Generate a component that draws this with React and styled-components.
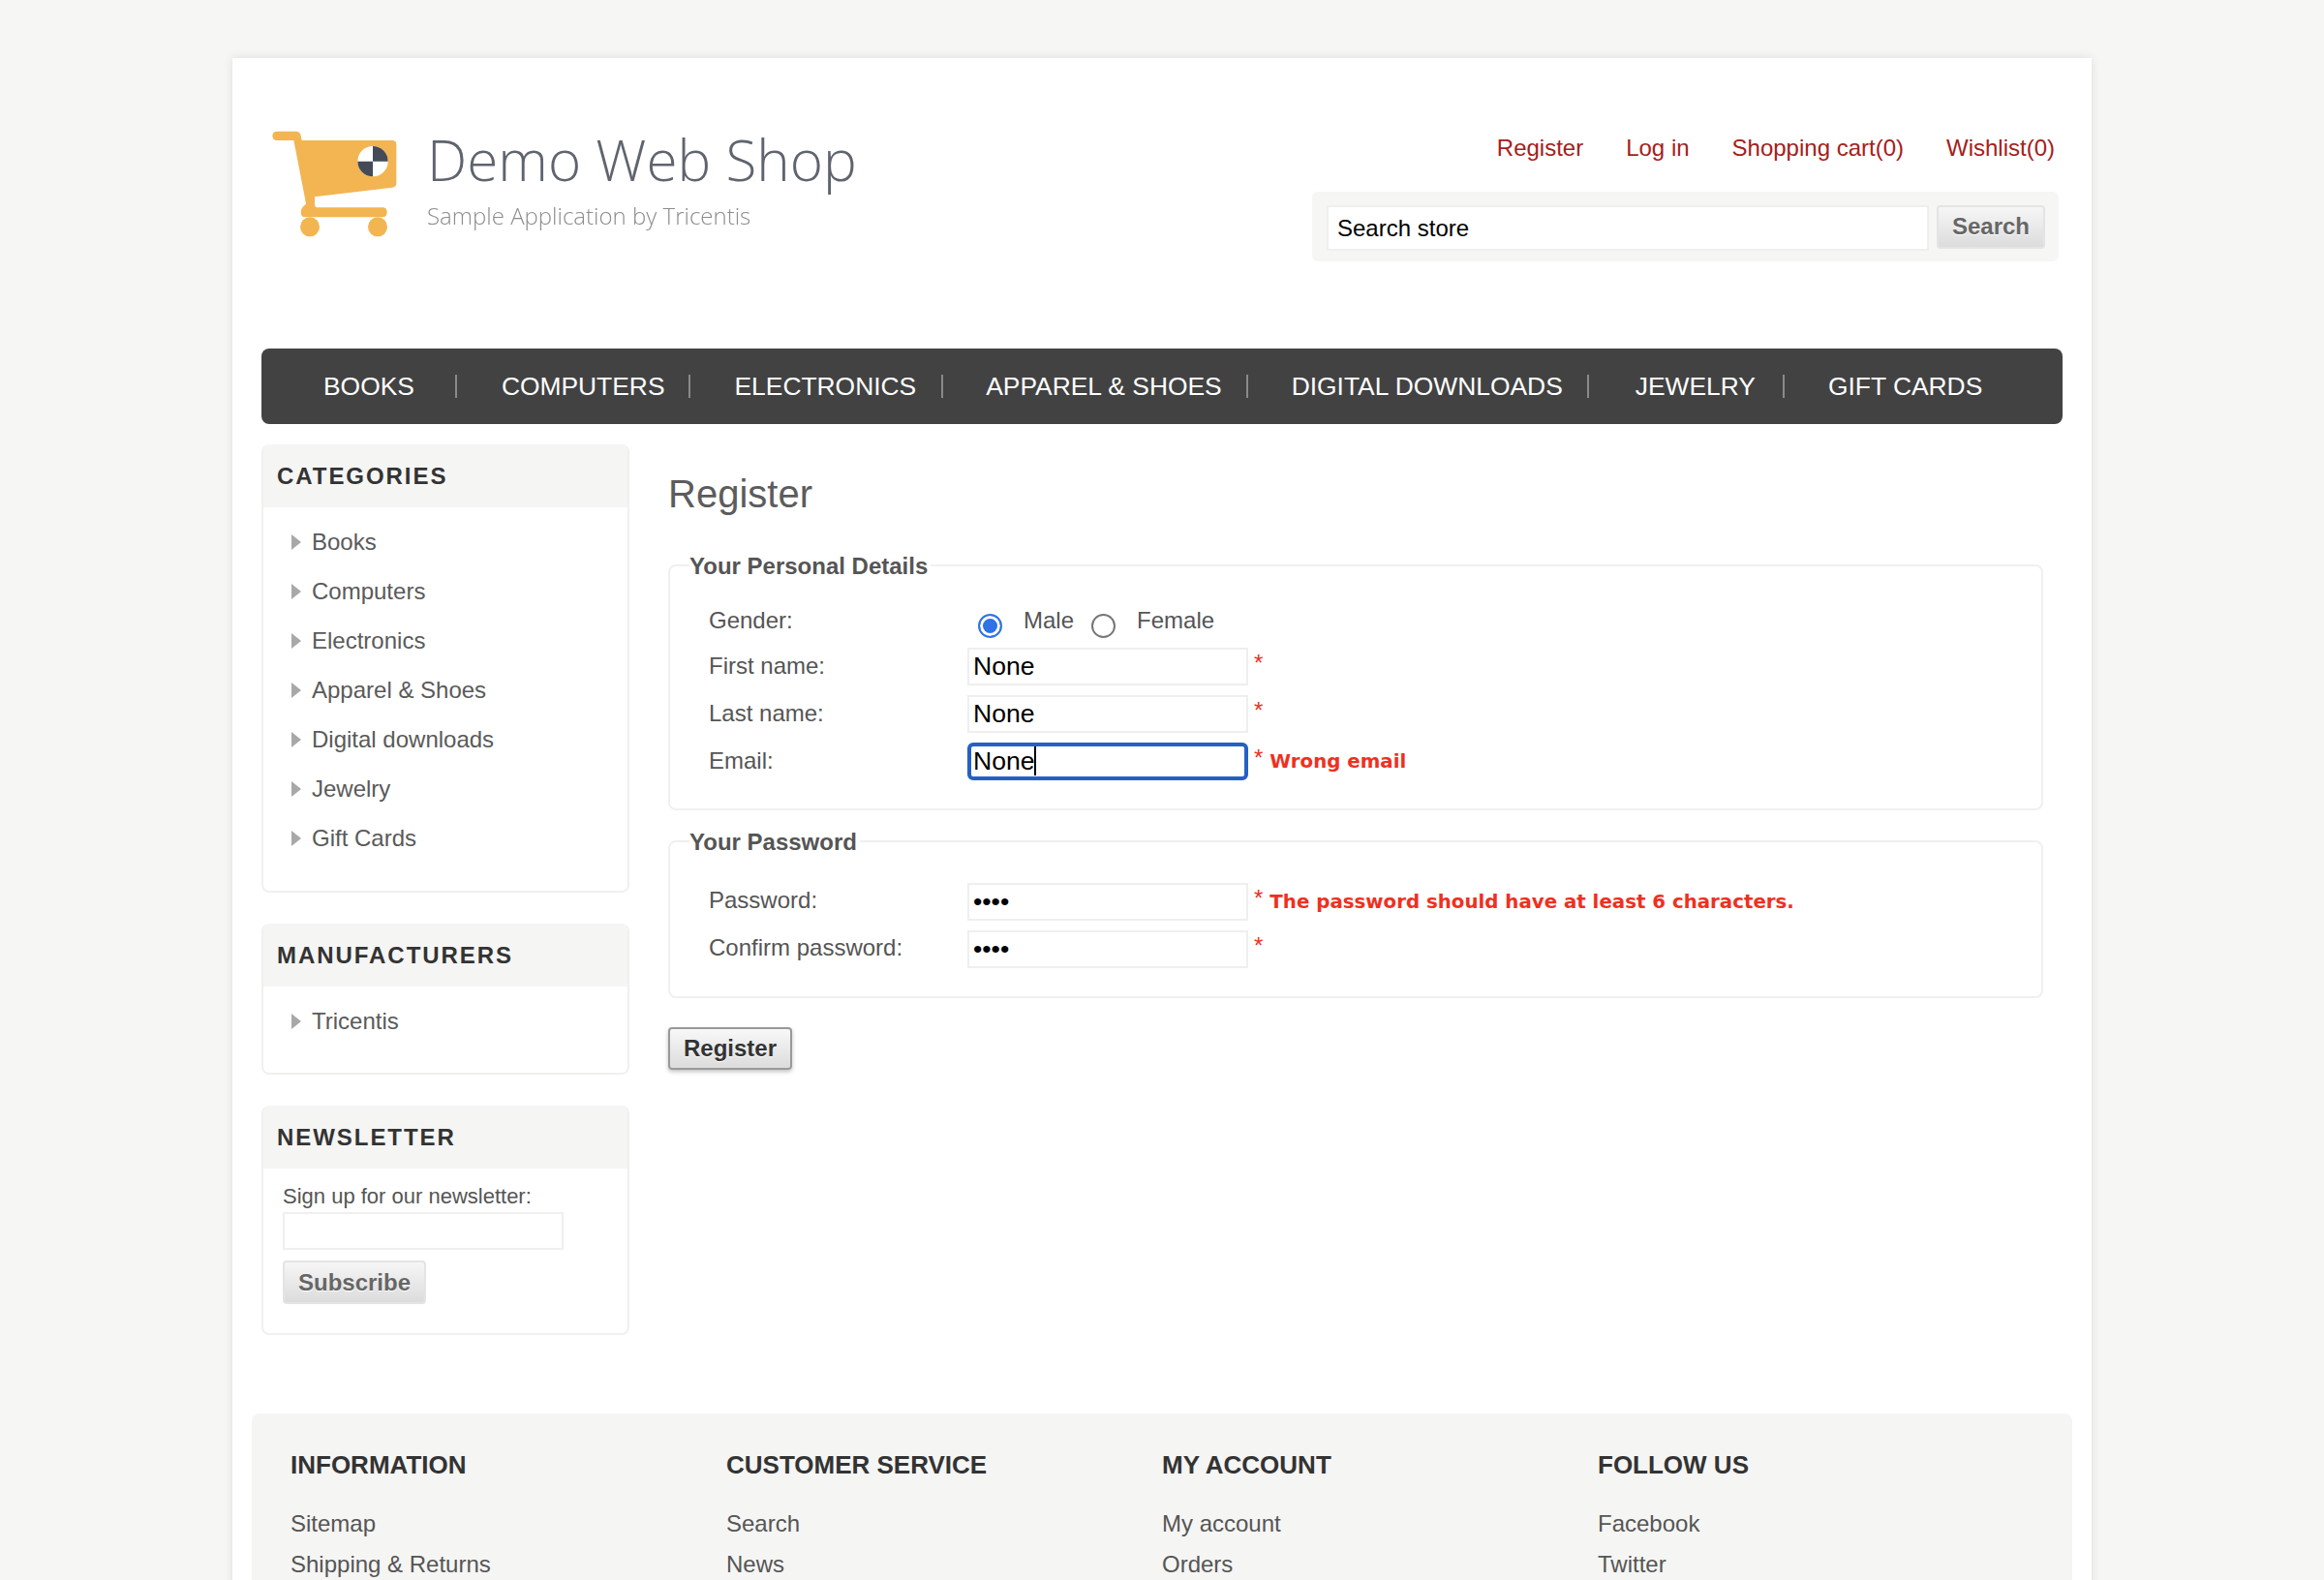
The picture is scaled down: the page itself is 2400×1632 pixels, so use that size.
import React from "react";
import styled, { createGlobalStyle } from "styled-components";

const GlobalStyle = createGlobalStyle`
  html, body {
    margin: 0;
    height: 100%;
    overflow: hidden;
    background: #f6f6f5;
    font-family: "Liberation Sans", Arial, sans-serif;
  }
  * { box-sizing: border-box; }
`;

const Page = styled.div`
  width: 1920px;
  margin: 60px auto 0;
  background: #fff;
  box-shadow: 0 0 10px rgba(0, 0, 0, 0.1);
  color: #555;
  font-size: 24px;
`;

// cabecera
const Header = styled.header`
  height: 300px;
  padding: 60px 34px 0 30px;
  display: flex;
  justify-content: space-between;
`;
const Logo = styled.div`
  display: flex;
  filter: blur(0.5px);
`;
const LogoText = styled.div`
  margin: 4px 0 0 1px;
  font-family: "Open Sans", sans-serif;
  font-weight: 300;
`;
const LogoTitle = styled.div`
  font-size: 58.4px;
  line-height: 82px;
  color: #5f646e;
`;
const LogoSub = styled.div`
  font-size: 24px;
  line-height: 32px;
  color: #8d8d8d;
  margin-top: 1px;
`;
const HeaderRight = styled.div`
  width: 771px;
  padding-top: 18px;
`;
const TopLinks = styled.div`
  display: flex;
  justify-content: flex-end;
  gap: 44px;
  padding-right: 4px;
  line-height: 30px;
`;
const TopLink = styled.a`
  color: #a5201a;
`;
const SearchBox = styled.div`
  margin-top: 30px;
  height: 72px;
  padding: 14px 14px 0 15px;
  background: #f6f6f5;
  border-radius: 6px;
  display: flex;
  gap: 8px;
  align-items: flex-start;
`;
const SearchInput = styled.input`
  flex: 1;
  height: 47px;
  border: 2px solid #efefef;
  background: #fff;
  padding: 0 9px;
  font: 24px "Liberation Sans", Arial, sans-serif;
  color: #000;
  outline: none;
`;
const GreyButton = styled.button`
  background: linear-gradient(#f6f6f6, #dcdcdc);
  border: 2px solid #e4e4e4;
  border-radius: 4px;
  color: #666;
  font: bold 24px "Liberation Sans", Arial, sans-serif;
  text-shadow: 0 1px 0 #fff;
  height: 45px;
  padding: 0;
  width: ${(p) => p.$width}px;
`;
const SearchButton = styled(GreyButton)`
  padding-bottom: 2px;
`;
const SubscribeButton = styled(GreyButton)`
  margin-top: 11px;
`;

// menu
const Menu = styled.nav`
  margin: 0 30px;
  height: 78px;
  background: #424242;
  border-radius: 8px;
  display: flex;
  align-items: center;
`;
const MenuItem = styled.a`
  color: #fff;
  font-size: 26.4px;
  line-height: 24px;
  white-space: nowrap;
  padding-left: ${(p) => p.$left}px;
  padding-right: ${(p) => p.$right}px;
  border-right: ${(p) => (p.$last ? "none" : "2px solid #8a8a8a")};
`;

// cuerpo
const Content = styled.div`
  padding: 21px 50px 0 30px;
  display: flex;
  gap: 40px;
`;
const Sidebar = styled.aside`
  width: 380px;
  flex: none;
  display: flex;
  flex-direction: column;
  gap: 32px;
`;
const Block = styled.section`
  border: 2px solid #f0f0ef;
  border-top: none;
  border-radius: 8px;
  overflow: hidden;
  padding-bottom: ${(p) => p.$bottom}px;
`;
const BlockTitle = styled.h3`
  margin: 0;
  height: 65px;
  background: #f5f5f4;
  padding-left: 14px;
  font-size: 24px;
  line-height: 65px;
  font-weight: bold;
  letter-spacing: 1.95px;
  color: #333;
`;
const BlockList = styled.ul`
  list-style: none;
  margin: 10px 0 0;
  padding: 0;
`;
const BlockItem = styled.li`
  height: 51px;
  padding-left: 29px;
  display: flex;
  align-items: center;
  gap: 11px;
  color: #5a5a5a;
`;
const Arrow = styled.span`
  width: 0;
  height: 0;
  border-left: 10px solid #a8a8a8;
  border-top: 8px solid transparent;
  border-bottom: 8px solid transparent;
`;
const Newsletter = styled.div`
  padding: 14px 0 0 20px;
  font-size: 22px;
  line-height: 30px;
`;
const SmallInput = styled.input`
  display: block;
  width: 290px;
  height: 39px;
  margin-top: ${(p) => p.$top || 0}px;
  border: 2px solid #efefef;
  background: #fff;
  padding: 0 4px;
  font: 26.6px "Liberation Sans", Arial, sans-serif;
  color: #000;
  outline: none;
`;

// formulario
const Main = styled.main`
  flex: 1;
`;
const PageTitle = styled.h1`
  margin: 25px 0 0;
  font-size: 40px;
  line-height: 52px;
  font-weight: normal;
  color: #5c5c5c;
`;
const Fieldset = styled.fieldset`
  margin: ${(p) => p.$top}px 0 0;
  padding: ${(p) => p.$padTop}px 0 0 40px;
  height: ${(p) => p.$height}px;
  border: 2px solid #f0f0f0;
  border-radius: 8px;
`;
const Legend = styled.legend`
  margin-left: -20px;
  padding: 2px 3px 0 0;
  font-size: 24px;
  line-height: 28px;
  font-weight: bold;
  color: #555;
`;
const Row = styled.div`
  height: 39px;
  margin-bottom: 10px;
  display: flex;
  align-items: flex-start;
`;
const GenderRow = styled(Row)`
  height: 31px;
  margin-bottom: 18px;
`;
const Label = styled.label`
  width: 267px;
  flex: none;
  line-height: ${(p) => p.$line}px;
`;
const Required = styled.span`
  margin-left: 6px;
  color: #f0301f;
  font-size: 24px;
  line-height: 32px;
`;
const FieldError = styled.span`
  margin-left: 7px;
  color: #f0301f;
  font: bold 19.8px "DejaVu Sans", Verdana, sans-serif;
  line-height: 39px;
`;
const Radio = styled.span`
  width: 25px;
  height: 25px;
  margin: 14px 22px 0 ${(p) => p.$left}px;
  border-radius: 50%;
  flex: none;
  border: ${(p) => (p.$on ? "2.5px solid #2f73e6" : "2px solid #767676")};
  background: ${(p) => (p.$on ? "#2f73e6" : "#fff")};
  box-shadow: ${(p) => (p.$on ? "inset 0 0 0 3px #fff" : "none")};
`;
const RadioText = styled.span`
  line-height: 41px;
`;
const EmailField = styled.div`
  position: relative;
`;
const FocusedInput = styled(SmallInput)`
  border: 4px solid #2560c4;
  border-radius: 6px;
  padding: 0 2px;
`;
const Caret = styled.span`
  position: absolute;
  left: 69px;
  top: 4px;
  width: 2px;
  height: 30px;
  background: #000;
`;
const RegisterButton = styled.button`
  display: block;
  margin-top: 30px;
  width: 128px;
  height: 44px;
  padding: 0;
  border: 2px solid #999;
  border-radius: 4px;
  background: linear-gradient(#f8f8f8, #dcdcdc);
  box-shadow: 0 2px 4px rgba(0, 0, 0, 0.25);
  color: #333;
  font: bold 24px "Liberation Sans", Arial, sans-serif;
  text-shadow: 0 1px 0 #fff;
`;

// pie
const Footer = styled.footer`
  margin: 81px 20px 0;
  padding: 36px 40px 30px;
  background: #f5f5f4;
  border-radius: 8px 8px 0 0;
  display: grid;
  grid-template-columns: repeat(4, 450px);
`;
const FooterTitle = styled.h3`
  margin: 0 0 23px;
  font-size: 26px;
  line-height: 34px;
  font-weight: bold;
  color: #333;
`;
const FooterLink = styled.a`
  display: block;
  line-height: 42px;
  color: #555;
`;

const CartLogo = () => (
  <svg width="170" height="130" viewBox="0 0 510 390">
    <path
      d="M48 47H108Q119 47 122 60L125 75H405Q418 75 418 88V208Q418 220 405 221L165 250V270Q165 283 172 283H375Q389 283 389 298T375 313H135Q122 313 122 298T138 272L135 255L100 75L95 75H48Q34 75 34 61T48 47Z"
      fill="#f2b552"
    />
    <circle cx="150" cy="343" r="30" fill="#f2b552" />
    <circle cx="360" cy="343" r="30" fill="#f2b552" />
    <circle cx="345" cy="140" r="47" fill="#fff" />
    <path d="M345 93A47 47 0 0 1 392 140H345Z" fill="#454a57" />
    <path d="M345 187A47 47 0 0 1 298 140H345Z" fill="#454a57" />
  </svg>
);

const menu = [
  { text: "BOOKS", left: 64, right: 42 },
  { text: "COMPUTERS", left: 46, right: 24 },
  { text: "ELECTRONICS", left: 46, right: 26 },
  { text: "APPAREL & SHOES", left: 44, right: 25 },
  { text: "DIGITAL DOWNLOADS", left: 45, right: 25 },
  { text: "JEWELRY", left: 48, right: 28 },
  { text: "GIFT CARDS", left: 45, right: 0, last: true },
];

const categories = ["Books", "Computers", "Electronics", "Apparel & Shoes", "Digital downloads", "Jewelry", "Gift Cards"];

const footer = [
  { title: "INFORMATION", links: ["Sitemap", "Shipping & Returns"] },
  { title: "CUSTOMER SERVICE", links: ["Search", "News"] },
  { title: "MY ACCOUNT", links: ["My account", "Orders"] },
  { title: "FOLLOW US", links: ["Facebook", "Twitter"] },
];

const App = () => (
  <>
    <GlobalStyle />
    <Page>
      <Header>
        <Logo>
          <CartLogo />
          <LogoText>
            <LogoTitle>Demo Web Shop</LogoTitle>
            <LogoSub>Sample Application by Tricentis</LogoSub>
          </LogoText>
        </Logo>
        <HeaderRight>
          <TopLinks>
            <TopLink>Register</TopLink>
            <TopLink>Log in</TopLink>
            <TopLink>Shopping cart(0)</TopLink>
            <TopLink>Wishlist(0)</TopLink>
          </TopLinks>
          <SearchBox>
            <SearchInput readOnly value="Search store" />
            <SearchButton $width={112}>Search</SearchButton>
          </SearchBox>
        </HeaderRight>
      </Header>

      <Menu>
        {menu.map((m) => (
          <MenuItem key={m.text} $left={m.left} $right={m.right} $last={m.last}>
            {m.text}
          </MenuItem>
        ))}
      </Menu>

      <Content>
        <Sidebar>
          <Block $bottom={29}>
            <BlockTitle>CATEGORIES</BlockTitle>
            <BlockList>
              {categories.map((c) => (
                <BlockItem key={c}>
                  <Arrow />
                  {c}
                </BlockItem>
              ))}
            </BlockList>
          </Block>
          <Block $bottom={28}>
            <BlockTitle>MANUFACTURERS</BlockTitle>
            <BlockList>
              <BlockItem>
                <Arrow />
                Tricentis
              </BlockItem>
            </BlockList>
          </Block>
          <Block $bottom={30}>
            <BlockTitle>NEWSLETTER</BlockTitle>
            <Newsletter>
              Sign up for our newsletter:
              <SmallInput readOnly $top={1} />
              <SubscribeButton $width={148}>Subscribe</SubscribeButton>
            </Newsletter>
          </Block>
        </Sidebar>

        <Main>
          <PageTitle>Register</PageTitle>
          <Fieldset $top={33} $height={268} $padTop={21}>
            <Legend>Your Personal Details</Legend>
            <GenderRow>
              <Label $line={41}>Gender:</Label>
              <Radio $on $left={11} />
              <RadioText>Male</RadioText>
              <Radio $left={18} />
              <RadioText>Female</RadioText>
            </GenderRow>
            <Row>
              <Label $line={38}>First name:</Label>
              <SmallInput readOnly value="None" />
              <Required>*</Required>
            </Row>
            <Row>
              <Label $line={38}>Last name:</Label>
              <SmallInput readOnly value="None" />
              <Required>*</Required>
            </Row>
            <Row>
              <Label $line={38}>Email:</Label>
              <EmailField>
                <FocusedInput readOnly value="None" />
                <Caret />
              </EmailField>
              <Required>*</Required>
              <FieldError>Wrong email</FieldError>
            </Row>
          </Fieldset>
          <Fieldset $top={17} $height={177} $padTop={28}>
            <Legend>Your Password</Legend>
            <Row>
              <Label $line={36}>Password:</Label>
              <SmallInput readOnly type="password" value="None" />
              <Required>*</Required>
              <FieldError>The password should have at least 6 characters.</FieldError>
            </Row>
            <Row>
              <Label $line={36}>Confirm password:</Label>
              <SmallInput readOnly type="password" value="None" />
              <Required>*</Required>
            </Row>
          </Fieldset>
          <RegisterButton>Register</RegisterButton>
        </Main>
      </Content>

      <Footer>
        {footer.map((col) => (
          <div key={col.title}>
            <FooterTitle>{col.title}</FooterTitle>
            {col.links.map((l) => (
              <FooterLink key={l}>{l}</FooterLink>
            ))}
          </div>
        ))}
      </Footer>
    </Page>
  </>
);

export default App;
